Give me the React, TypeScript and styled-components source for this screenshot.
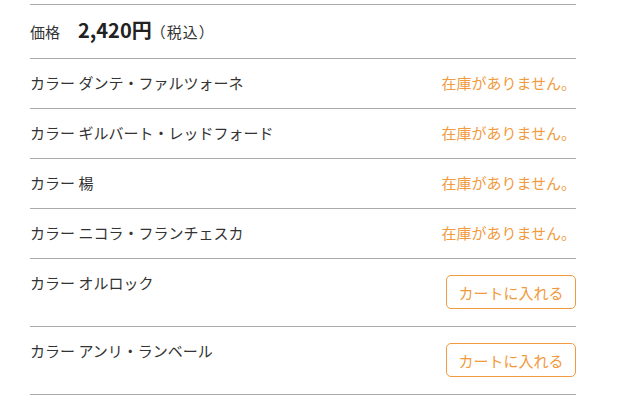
import styled, { createGlobalStyle } from 'styled-components'

const GlobalStyle = createGlobalStyle`
  html, body {
    margin: 0;
    padding: 0;
    background: #fff;
  }
  body {
    font-family: "Noto Sans CJK JP", "Noto Sans", sans-serif;
    color: #333;
  }
`

const orange = '#f19a3e'

const Wrapper = styled.div`
  padding: 4px 46px 0 30px;
`

const List = styled.ul`
  list-style: none;
  margin: 0;
  padding: 0;
  border-top: 1px solid #aaa;
`

const PriceRow = styled.li`
  display: flex;
  align-items: baseline;
  height: 54px;
  padding-top: 11px;
  box-sizing: border-box;
  border-bottom: 1px solid #aaa;
  line-height: 28px;
`

const PriceLabel = styled.span`
  font-size: 15px;
  margin-right: 18px;
`

const PriceValue = styled.span`
  font-size: 20px;
  font-weight: bold;
  color: #222;
`

const Tax = styled.span`
  font-size: 15px;
  margin-left: -1px;
  letter-spacing: 1px;
`

const Row = styled.li<{ $button?: boolean }>`
  display: flex;
  justify-content: space-between;
  align-items: ${({ $button }) => ($button ? 'flex-start' : 'center')};
  height: ${({ $button }) => ($button ? '68px' : '50px')};
  padding: ${({ $button }) => ($button ? '16px 0' : '0 0 2px')};
  box-sizing: border-box;
  border-bottom: 1px solid #aaa;
  font-size: 15px;
  line-height: 16px;
`

const Name = styled.span`
  white-space: nowrap;
`

const SoldOut = styled.span`
  color: ${orange};
`

const CartButton = styled.button`
  width: 130px;
  height: 34px;
  border: 1px solid ${orange};
  border-radius: 5px;
  background: #fff;
  color: ${orange};
  font-family: inherit;
  font-size: 15px;
  padding: 0;
  cursor: pointer;
`

const items = [
  { name: 'ダンテ・ファルツォーネ', stock: false },
  { name: 'ギルバート・レッドフォード', stock: false },
  { name: '楊', stock: false },
  { name: 'ニコラ・フランチェスカ', stock: false },
  { name: 'オルロック', stock: true },
  { name: 'アンリ・ランベール', stock: true },
]

export default function App() {
  return (
    <Wrapper>
      <GlobalStyle />
      <List>
        <PriceRow>
          <PriceLabel>価格</PriceLabel>
          <PriceValue>2,420円</PriceValue>
          <Tax>（税込）</Tax>
        </PriceRow>
        {items.map((item) => (
          <Row key={item.name} $button={item.stock}>
            <Name>カラー {item.name}</Name>
            {item.stock ? <CartButton>カートに入れる</CartButton> : <SoldOut>在庫がありません。</SoldOut>}
          </Row>
        ))}
      </List>
    </Wrapper>
  )
}
